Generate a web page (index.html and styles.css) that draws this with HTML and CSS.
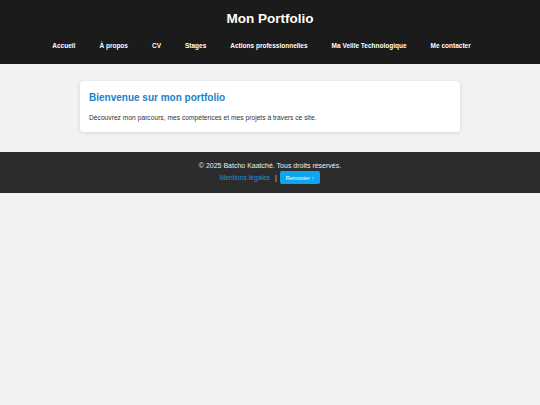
FILE: index.html
```html
<!DOCTYPE html>
<html lang="fr">
<head>
<meta charset="UTF-8" />
<meta name="viewport" content="width=device-width, initial-scale=1" />
<title>Mon Portfolio</title>
<link rel="stylesheet" href="styles.css">
</head>
<body>
  <header class="site-header">
    <h1>Mon Portfolio</h1>
    <nav>
      <ul class="menu">
        <li><a href="#">Accueil</a></li>
        <li><a href="#">À propos</a></li>
        <li><a href="#">CV</a></li>
        <li><a href="#">Stages</a></li>
        <li><a href="#">Actions professionnelles</a></li>
        <li><a href="#">Ma Veille Technologique</a></li>
        <li><a href="#">Me contacter</a></li>
      </ul>
    </nav>
  </header>

  <main class="content">
    <section class="card">
      <h2>Bienvenue sur mon portfolio</h2>
      <p>Découvrez mon parcours, mes compétences et mes projets à travers ce site.</p>
    </section>
  </main>

  <footer class="site-footer">
    <p>© 2025 Batcho Kaatché. Tous droits réservés.</p>
    <div class="footer-links">
      <a href="#">Mentions légales</a>
      <span class="sep">|</span>
      <button id="toTop">Remonter ↑</button>
    </div>
  </footer>

<script>
  document.getElementById('toTop').addEventListener('click', () => {
    window.scrollTo({ top: 0, behavior: 'smooth' });
  });
</script>
</body>
</html>
```

FILE: styles.css
```css
* {
  margin: 0; padding: 0; box-sizing: border-box;
}
body {
  font-family: "Liberation Sans", Arial, sans-serif;
  background: #f2f2f2;
  color: #333;
}
.site-header {
  background: #1b1b1b;
  color: #fff;
  text-align: center;
  height: 64px;
  padding-top: 10px;
}
.site-header h1 {
  font-size: 13.5px;
  font-weight: bold;
  line-height: 17px;
}
.menu {
  list-style: none;
  display: flex;
  justify-content: center;
  padding-right: 17px;
  margin-top: 7px;
}
.menu li {
  margin: 0 12px;
}
.menu a {
  color: #fff;
  text-decoration: none;
  font-size: 6.5px;
  font-weight: bold;
}
/* contenu */
.content {
  padding: 17px 0 20px;
}
.card {
  background: #fff;
  max-width: 380px;
  margin: 0 auto;
  padding: 10px 9px 9px;
  border-radius: 4px;
  box-shadow: 0 1px 4px rgba(0,0,0,0.12);
}
.card h2 {
  color: #1a7fc8;
  font-size: 10px;
  line-height: 13px;
  margin-bottom: 9px;
}
.card p {
  font-size: 6.7px;
  line-height: 10px;
  color: #333;
}
/* footer */
.site-footer {
  background: #2c2c2c;
  color: #eee;
  text-align: center;
  padding: 9px 0 8px;
  height: 41px;
}
.site-footer p {
  font-size: 7px;
  line-height: 9px;
}
.footer-links {
  display: flex;
  justify-content: center;
  align-items: center;
  margin-top: 1px;
}
.footer-links a {
  color: #1d93dc;
  text-decoration: none;
  font-size: 6.7px;
}
.footer-links .sep {
  font-size: 7px;
  color: #ddd;
  margin: 0 3px 0 5px;
}
.footer-links button {
  background: #0ea5f0;
  color: #fff;
  border: none;
  border-radius: 2px;
  font-family: inherit;
  font-size: 5.5px;
  padding: 0 6px;
  height: 13px;
  cursor: pointer;
}
.footer-links button:hover {
  background: #0b8fd3;
}
```
